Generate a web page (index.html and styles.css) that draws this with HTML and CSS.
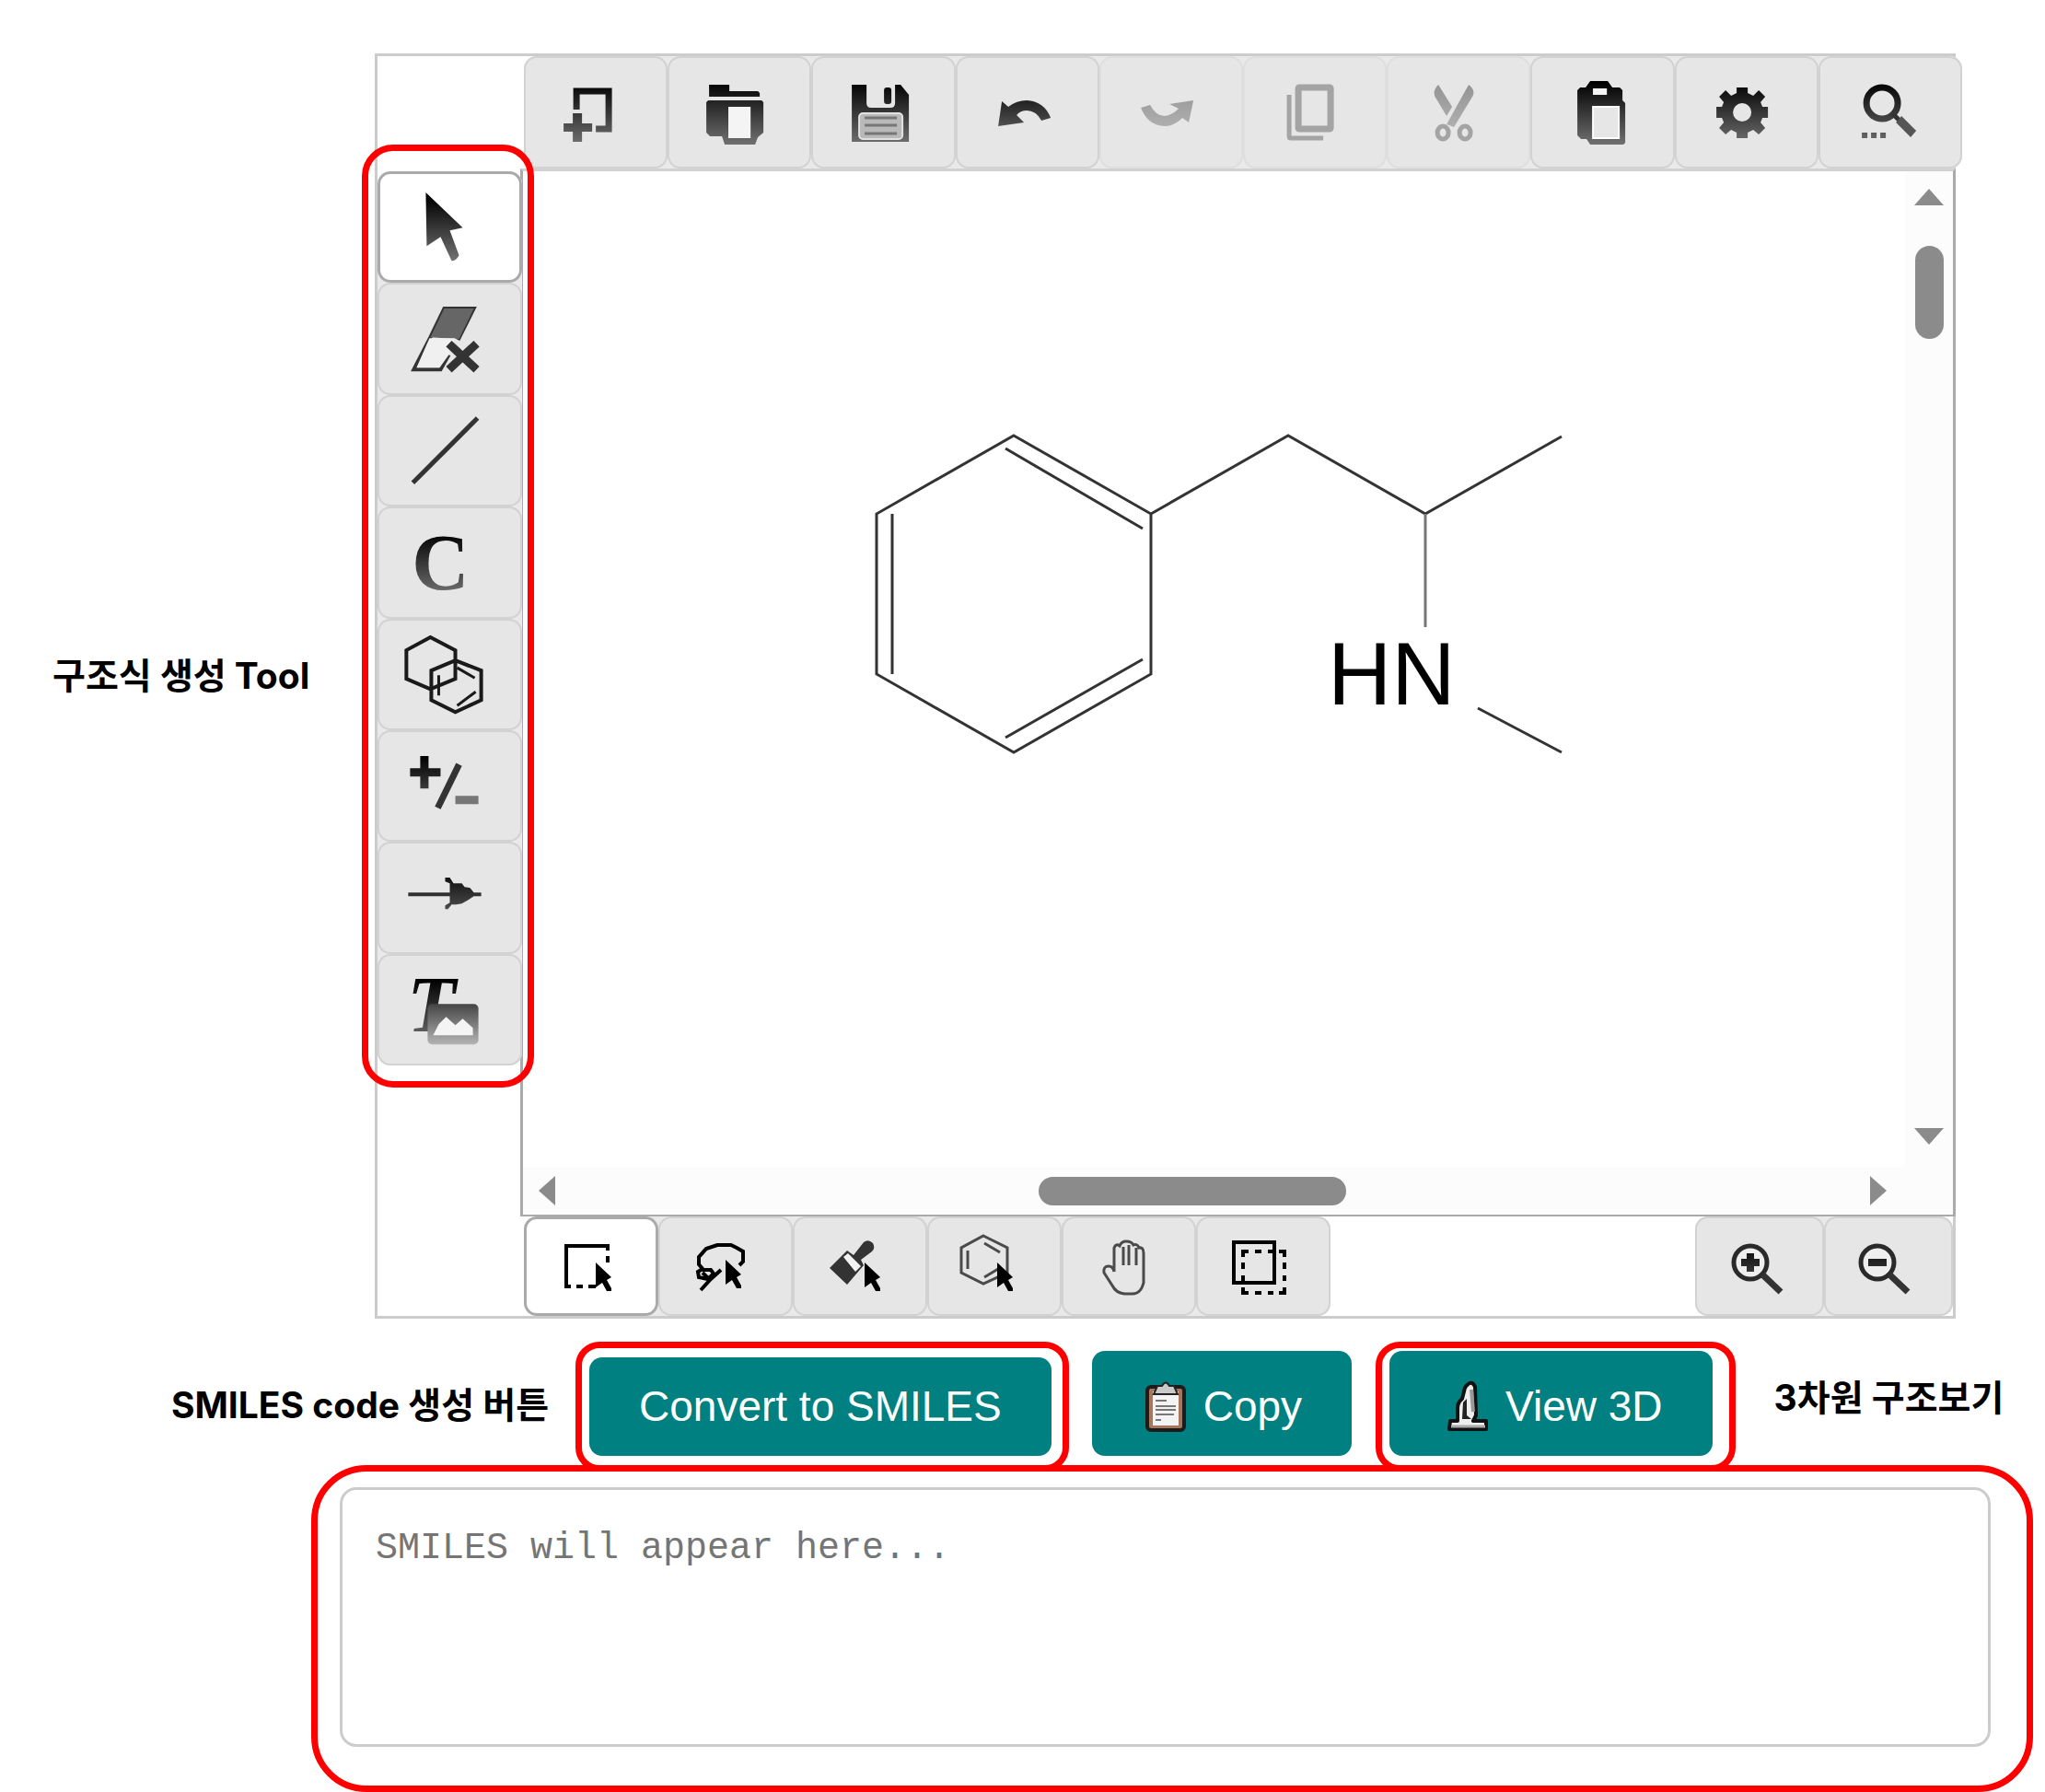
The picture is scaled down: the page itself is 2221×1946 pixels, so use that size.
FILE: index.html
```html
<!DOCTYPE html>
<html lang="ko">
<head>
<meta charset="utf-8">
<title>SMILES Editor</title>
<link rel="stylesheet" href="styles.css">
</head>
<body>
<svg class="defs" width="0" height="0" aria-hidden="true">
  <defs>
    <linearGradient id="ink" gradientUnits="userSpaceOnUse" x1="0" y1="28" x2="0" y2="100">
      <stop offset="0" stop-color="#000"/><stop offset="1" stop-color="#777"/>
    </linearGradient>
    <linearGradient id="photo" gradientUnits="userSpaceOnUse" x1="0" y1="54" x2="0" y2="98">
      <stop offset="0" stop-color="#444"/><stop offset="1" stop-color="#b4b4b4"/>
    </linearGradient>
    <symbol id="cursor" viewBox="0 0 18 32"><path d="M0 0L17 16L12 19L17 28V31H12L7 22L0 27Z"/></symbol>
  </defs>
</svg>

<main class="page">
  <section class="editor-row">
    <h2 class="note note-tools">구조식 생성 Tool</h2>

    <div class="editor">
      <div class="toolbar" role="toolbar" aria-label="File">
        <button class="tool" type="button" aria-label="New"><svg viewBox="0 0 156 122"><path class="line w7 fade" d="M57 58V38H92V79H78"/><path d="M53 62H63V73H74V82H63V93H53V82H43V73H53Z"/></svg></button>
        <button class="tool" type="button" aria-label="Open"><svg viewBox="0 0 156 122"><path d="M45 31H67V38H98L100 40V44H45Z"/><path fill-rule="evenodd" d="M44 48H102L104 50V83L98 88L95 96H62L59 87H46L42 83V50ZM66 55V89H90V55Z"/><path class="paper" d="M66 55H90V89H66Z"/></svg></button>
        <button class="tool" type="button" aria-label="Save"><svg viewBox="0 0 156 122"><path d="M44 31H60V51Q60 56 65 56H86Q91 56 91 51V31H97L106 42V93H44Z"/><rect x="79" y="34" width="8" height="18" rx="3"/><rect x="52" y="62" width="47" height="28" rx="4" fill="#b9b9b9" stroke="#e2e2e2" stroke-width="2"/><path class="line w3 mid" d="M58 67H93M58 75H93M58 84H93"/></svg></button>
        <button class="tool" type="button" aria-label="Undo"><svg viewBox="0 0 156 122"><path d="M46 76L50 49L57 55Q66 48 77 48Q96 49 103 67L93 70Q87 59 77 59Q70 59 66 64L74 72Z"/></svg></button>
        <button class="tool" type="button" aria-label="Redo" disabled><svg viewBox="0 0 156 122"><path d="M45 56L55 53Q61 65 71 65Q79 64 86 57L76 52L102 48L97 72L90 67Q81 76 71 76Q52 75 45 56Z"/></svg></button>
        <button class="tool" type="button" aria-label="Copy selection" disabled><svg viewBox="0 0 156 122"><rect class="line w7" x="60" y="34" width="35" height="45" rx="1"/><path class="line w5" d="M50 42V87Q50 89 52 89H87"/></svg></button>
        <button class="tool" type="button" aria-label="Cut" disabled><svg viewBox="0 0 156 122"><path d="M89 31Q97 37 93 44L73 77L65 74Z"/><path d="M56 31Q49 38 53 45L65 65L71 55Z"/><ellipse class="line w5" cx="61" cy="83" rx="6" ry="7"/><ellipse class="line w5" cx="85" cy="83" rx="6" ry="7"/></svg></button>
        <button class="tool" type="button" aria-label="Paste"><svg viewBox="0 0 156 122"><path fill-rule="evenodd" d="M54 34H60L65 27H84L89 34H97L100 37V48L103 51V94L101 96H65L61 90H55L51 86V37ZM68 35V42H83V35Z"/><path class="paper" d="M68 35H83V42H68Z"/><path d="M68 55H96V89H68Z" fill="#e6e6e6" stroke="#fff" stroke-width="2"/></svg></button>
        <button class="tool" type="button" aria-label="Settings"><svg viewBox="0 0 156 122"><path fill-rule="evenodd" d="M67 34H79V40L85 43L91 37L98 44L93 50L95 55H101V67H95L93 72L98 78L91 85L85 80L79 83V89H67V83L61 80L55 85L48 78L53 72L51 67H45V55H51L53 50L48 44L55 37L61 43L67 40ZM73 51A10 10 0 1 0 73 71A10 10 0 1 0 73 51Z"/></svg></button>
        <button class="tool" type="button" aria-label="Search"><svg viewBox="0 0 156 122"><circle class="line w7 fade" cx="69" cy="51" r="17"/><path class="line w5" d="M81 63L88 70"/><path d="M90 65L106 81L100 88L84 72Z" fill="#555"/><path d="M47 83H53V89H47ZM57 83H63V89H57ZM67 83H73V89H67Z"/></svg></button>
      </div>

      <div class="side">
        <div class="side-tools" role="toolbar" aria-label="Drawing">
          <button class="tool selected" type="button" aria-label="Select"><svg viewBox="0 0 156 121"><path d="M52 23L92 61L78 64L88 91Q85 97 80 97L68 71L53 81Z"/></svg></button>
          <button class="tool" type="button" aria-label="Erase"><svg viewBox="0 0 156 121"><path class="line w4" d="M77 78L68 94H39L57 59L72 28H104L87 62"/><path d="M57 59L72 28H104L88 61Z" fill="#666"/><path d="M56 60H84L77 78L67 92H42Z" fill="#f0f0f0"/><path class="line" stroke-width="9" d="M77 66L107 94M107 66L77 94"/></svg></button>
          <button class="tool" type="button" aria-label="Bond"><svg viewBox="0 0 156 121"><path class="line w5" d="M38 95L108 25"/></svg></button>
          <button class="tool" type="button" aria-label="Atom"><svg viewBox="0 0 156 121"><text class="glyph" x="68" y="90" text-anchor="middle">C</text></svg></button>
          <button class="tool" type="button" aria-label="Ring"><svg viewBox="0 0 156 121"><path class="line w4 dark" d="M57 20L84 34V65L57 76L31 65V34ZM84 45L112 56V88L84 101L58 88V56Z"/><path class="line w3 dark" d="M86 53L105 64M86 94L106 79M66 61V83"/></svg></button>
          <button class="tool" type="button" aria-label="Charge"><svg viewBox="0 0 156 121"><path d="M46 28H55V41H68V50H55V63H46V50H35V41H46Z"/><path class="line w7" d="M88 37L65 84"/><path d="M84 71H109V80H84Z" fill="#777"/></svg></button>
          <button class="tool" type="button" aria-label="Reaction arrow"><svg viewBox="0 0 156 121"><path d="M33 55H78V45L73 43V39H78L82 45H91L94 49L100 50L104 55H112V59H104L98 63L91 67L85 68H80L76 73H73V69L78 66V59H33Z"/></svg></button>
          <button class="tool" type="button" aria-label="Text and image"><svg viewBox="0 0 156 121"><text class="glyph slanted" x="32" y="84">T</text><rect x="54" y="54" width="55" height="44" rx="5" fill="url(#photo)"/><path class="paper" d="M60 88L66 76L74 68L84 77L92 70L103 80V88Z"/></svg></button>
        </div>
      </div>

      <div class="canvas">
        <svg class="molecule" viewBox="569 186 1501 1081" role="img" aria-label="Methamphetamine structure">
          <path d="M1102 473L1251 558V732L1102 817L953 732V558ZM1093 487L1242 574M970 558V732M1093 801L1242 716M1251 558L1400 473L1549 558L1697 474M1606 769L1697 817"/>
          <path class="soft" d="M1549 558V681"/>
          <text x="1443" y="765">HN</text>
        </svg>
        <div class="scroll-y"><span class="tri up"></span><span class="thumb"></span><span class="tri down"></span></div>
        <div class="scroll-x"><span class="tri left"></span><span class="thumb"></span><span class="tri right"></span></div>
      </div>

      <div class="footbar">
        <div class="modes" role="toolbar" aria-label="Selection mode">
          <button class="tool selected" type="button" aria-label="Rectangle select"><svg viewBox="0 0 146 108"><path class="line w4 black" d="M78 76H70M64 76H57M51 76H46V32H91V37M91 43V50"/><use href="#cursor" x="78" y="50" width="18" height="32"/></svg></button>
          <button class="tool" type="button" aria-label="Lasso select"><svg viewBox="0 0 146 108"><path class="line w4 black" d="M88 53L92 49V38L85 34L79 31H64L52 35L44 44V52L49 58H57L60 62L54 68L44 66L43 60L48 57M48 61L56 69M68 58L57 68L46 80"/><use href="#cursor" x="73" y="47" width="18" height="32"/></svg></button>
          <button class="tool" type="button" aria-label="Brush select"><svg viewBox="0 0 146 108"><path d="M77 28Q82 24 87 29Q90 34 86 38L74 47L77 53L59 74L40 56L59 37L66 42Z" fill="#333"/><path d="M55 44L60 40L74 54L68 60Z" fill="#f2f2f2"/><use href="#cursor" x="78" y="50" width="18" height="32"/></svg></button>
          <button class="tool" type="button" aria-label="Fragment select"><svg viewBox="0 0 146 108"><path class="line w3 grey" d="M61 21L87 34V61L61 73L37 61V34ZM44 37V57M62 29L79 39M62 66L77 57"/><use href="#cursor" x="76" y="50" width="18" height="32"/></svg></button>
          <button class="tool" type="button" aria-label="Pan"><svg viewBox="0 0 146 108"><path class="line w3 grey" d="M57 60V34Q59 29 63 32Q65 27 70 27Q76 27 78 31Q82 29 84 34Q89 33 89 40V72Q86 84 77 84H68Q59 83 55 75L46 61Q45 54 51 54Q56 54 57 60M67 33V53M73 31V53M81 34V53"/></svg></button>
          <button class="tool" type="button" aria-label="Toggle select"><svg viewBox="0 0 146 108"><path class="line w4 black" d="M41 28H85V72H41Z"/><path class="line w4 black" d="M51 44V38H57M64 38H71M78 38H84M90 38H96V44M96 50V57M96 64V70M96 77V83H90M84 83H78M71 83H64M57 83H51V77M51 70V64M51 57V50"/></svg></button>
        </div>
        <div class="zooms">
          <button class="tool" type="button" aria-label="Zoom in"><svg viewBox="0 0 140 108"><circle cx="60" cy="50" r="18" fill="#eee" stroke="#2a2a2a" stroke-width="5"/><path class="line w7" d="M73 63L93 82"/><path d="M56 40H64V46H70V54H64V60H56V54H50V46H56Z"/></svg></button>
          <button class="tool" type="button" aria-label="Zoom out"><svg viewBox="0 0 140 108"><circle cx="58" cy="50" r="18" fill="#eee" stroke="#2a2a2a" stroke-width="5"/><path class="line w7" d="M71 63L91 82"/><path d="M48 46H68V54H48Z"/></svg></button>
        </div>
      </div>
    </div>
  </section>

  <section class="actions">
    <h2 class="note note-convert">SMILES code 생성 버튼</h2>
    <div class="ring ring-convert"><button class="action" type="button">Convert to SMILES</button></div>
    <button class="action tall copy" type="button"><svg viewBox="0 0 46 56" width="46" height="56"><rect x="3" y="7" width="40" height="47" rx="4" fill="#a8765a" stroke="#1c1c1c" stroke-width="4"/><path d="M9 12H37V49H9Z" fill="#f3f3f3"/><path d="M14 6H19Q23-1 27 6H32L36 15H10Z" fill="#c9c9c9" stroke="#222" stroke-width="2"/><path d="M12 22H24M12 28H34M12 32H34M12 37H32M12 43H18" fill="none" stroke="#777" stroke-width="2"/></svg><span>Copy</span></button>
    <div class="ring ring-view"><button class="action tall" type="button"><svg viewBox="0 0 46 56" width="46" height="56"><path d="M4 44H12V30Q12 24 17 20L20 8Q27-2 31 7L32 38L29 44H43V53H3Z" fill="#eee" stroke="#111" stroke-width="4" stroke-linejoin="round"/><path d="M18 24L22 20V38L27 42H17Z" fill="#222"/><path d="M27 10L29 34" fill="none" stroke="#999" stroke-width="4"/><path d="M5 50H42" stroke="#aaa" stroke-width="3"/></svg><span>View 3D</span></button></div>
    <h2 class="note note-view">3차원 구조보기</h2>
  </section>

  <section class="output">
    <textarea class="smiles" aria-label="SMILES" placeholder="SMILES will appear here..."></textarea>
  </section>
</main>
</body>
</html>
```
FILE: styles.css
```css
* { box-sizing: border-box; }

body {
  margin: 0;
  background: #fff;
  color: #000;
  font-family: "Liberation Sans", "Noto Sans CJK KR", sans-serif;
}

.defs { position: absolute; }

.page { padding-top: 58px; }

.note {
  margin: 0;
  font: 700 39px/54px Inter, "Noto Sans CJK KR", sans-serif;
  white-space: nowrap;
}

/* Editor */
.editor-row {
  display: grid;
  grid-template-columns: 407px minmax(0, 1fr);
  padding-right: 97px;
}

.note-tools {
  align-self: center;
  padding: 0 0 22px 57px;
}

.editor {
  display: grid;
  grid-template-columns: 155px minmax(0, 1fr);
  grid-template-rows: 122px auto 108px;
  border: 3px solid #ccc;
}

.tool {
  flex: 1;
  min-width: 0;
  min-height: 0;
  margin: 0;
  padding: 0;
  border: 0;
  border-radius: 14px;
  background: #e6e6e6;
  box-shadow: inset 0 0 0 2px #d2d2d2;
}

.tool svg {
  display: block;
  width: 100%;
  height: 100%;
  fill: url(#ink);
}

.tool:disabled { box-shadow: inset 0 0 0 2px #dedede; }
.tool:disabled svg { opacity: 0.36; }

.tool.selected {
  background: #fff;
  box-shadow: inset 0 0 0 3px #aaa;
}

.tool .line { fill: none; }
.line { stroke: #333; }
.w3 { stroke-width: 3; }
.w4 { stroke-width: 4; }
.w5 { stroke-width: 5; }
.w7 { stroke-width: 7; }
.fade { stroke: url(#ink); }
.black { stroke: #000; }
.dark { stroke: #1a1a1a; }
.mid { stroke: #777; }
.grey { stroke: #4a4a4a; }
.paper { fill: #f4f4f4; }
.modes use { fill: #000; }

.glyph { font: bold 86px "Liberation Serif", serif; }
.slanted { font-style: italic; }

.toolbar {
  grid-column: 2;
  display: flex;
  margin: 0 -10px 0 4px;
  border-radius: 14px;
  background: #e9e9e9;
  z-index: 1;
}

.side { padding-top: 3px; }

.side-tools {
  position: relative;
  display: grid;
  grid-template-rows: repeat(8, minmax(0, 1fr));
  height: 971px;
  margin-right: -2px;
  border-radius: 14px;
  background: linear-gradient(#fff 110px, #e9e9e9 110px);
  z-index: 1;
}

.side-tools::after {
  content: "";
  position: absolute;
  inset: -29px -13px -24px -17px;
  border: 7px solid #f00;
  border-radius: 34px;
  pointer-events: none;
}

.canvas {
  display: grid;
  grid-template-columns: minmax(0, 1fr) 52px;
  grid-template-rows: auto 52px;
  margin-right: -3px;
  border: 3px solid #aaa;
  border-top-color: #d2d2d2;
  border-bottom-width: 2px;
}

.molecule {
  display: block;
  width: 100%;
  fill: none;
  stroke: #333;
  stroke-width: 3;
}

.molecule .soft { stroke: #777; }

.molecule text {
  font: 96px "Liberation Sans", sans-serif;
  fill: #000;
  stroke: none;
}

.scroll-y,
.scroll-x {
  display: flex;
  align-items: center;
  background: #fcfcfc;
}

.scroll-y {
  flex-direction: column;
  padding: 19px 0 24px;
}

.scroll-x {
  grid-column: 1 / -1;
  padding: 0 72px 0 17px;
}

.thumb {
  border-radius: 16px;
  background: #8b8b8b;
}

.scroll-y .thumb { width: 31px; height: 101px; margin-top: 44px; }
.scroll-x .thumb { width: 334px; height: 31px; margin-left: 525px; }

.tri { background: #8b8b8b; }
.up, .down { width: 32px; height: 18px; }
.left, .right { width: 18px; height: 32px; }
.up { clip-path: polygon(50% 0, 100% 100%, 0 100%); }
.down { margin-top: auto; clip-path: polygon(0 0, 100% 0, 50% 100%); }
.left { clip-path: polygon(0 50%, 100% 0, 100% 100%); }
.right { margin-left: auto; clip-path: polygon(0 0, 100% 50%, 0 100%); }

.footbar {
  grid-column: 2;
  display: flex;
  justify-content: space-between;
  padding-left: 4px;
}

.modes,
.zooms {
  display: flex;
  border-radius: 14px;
  background: #e9e9e9;
}

.modes { background: linear-gradient(90deg, #fff 130px, #e9e9e9 130px); }
.modes .tool { flex: 0 0 146px; }
.zooms .tool { flex: 0 0 140px; }

/* Actions */
.actions {
  display: flex;
  align-items: flex-start;
  margin-top: 25px;
}

.note-convert {
  flex: 0 0 625px;
  padding: 42px 0 0 186px;
}

.note-view { padding: 34px 0 0 42px; }

.ring {
  height: 141px;
  border: 7px solid #f00;
  border-radius: 26px;
}

.ring-convert { padding: 10px 12px 0 8px; }
.ring-view { margin-left: 26px; padding: 3px 18px 0 8px; }

.action {
  display: flex;
  align-items: center;
  gap: 18px;
  height: 107px;
  margin: 0;
  padding: 0 54px 2px;
  border: 0;
  border-radius: 14px;
  background: #008080;
  color: #fff;
  font: 46px/54px "Liberation Sans", sans-serif;
  white-space: nowrap;
}

.action.tall {
  height: 114px;
  padding: 5px 54px 0 57px;
}

.copy { margin: 10px 0 0 25px; }
.ring-view .action.tall { padding-left: 62px; }

/* Output */
.output {
  position: relative;
  margin: -7px 13px 0 338px;
  padding: 17px 39px 42px 24px;
  border: 7px solid #f00;
  border-radius: 60px;
}

.smiles {
  display: block;
  width: 100%;
  height: 282px;
  padding: 36px;
  border: 3px solid #ccc;
  border-radius: 18px;
  background: #fff;
  resize: none;
  font: 40px/56px "Liberation Mono", monospace;
}

.smiles::placeholder { color: #757575; opacity: 1; }
```
